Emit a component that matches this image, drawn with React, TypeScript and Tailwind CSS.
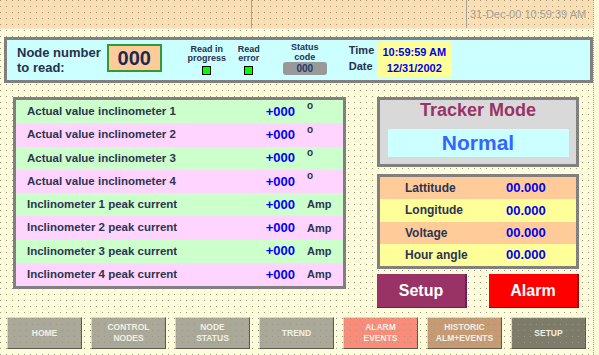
import React from 'react';

const DOTS =
  'bg-[radial-gradient(circle_at_0.5px_0.5px,#9a9682_0.8px,transparent_0.9px)] bg-[length:6px_6px]';

const TABLE_ROWS = [
  { label: 'Actual value inclinometer 1', unit: 'o', tone: 'bg-[#ccffcc]' },
  { label: 'Actual value inclinometer 2', unit: 'o', tone: 'bg-[#ffd5ff]' },
  { label: 'Actual value inclinometer 3', unit: 'o', tone: 'bg-[#ccffcc]' },
  { label: 'Actual value inclinometer 4', unit: 'o', tone: 'bg-[#ffd5ff]' },
  { label: 'Inclinometer 1 peak current', unit: 'Amp', tone: 'bg-[#ccffcc]' },
  { label: 'Inclinometer 2 peak current', unit: 'Amp', tone: 'bg-[#ffd5ff]' },
  { label: 'Inclinometer 3 peak current', unit: 'Amp', tone: 'bg-[#ccffcc]' },
  { label: 'Inclinometer 4 peak current', unit: 'Amp', tone: 'bg-[#ffd5ff]' },
];

const INFO_ROWS = [
  { label: 'Lattitude', tone: 'bg-[#ffcc99]' },
  { label: 'Longitude', tone: 'bg-[#ffff99]' },
  { label: 'Voltage', tone: 'bg-[#ffcc99]' },
  { label: 'Hour angle', tone: 'bg-[#ffff99]' },
];

const NAV = [
  { lines: ['HOME'], tone: 'bg-[#aaa999]' },
  { lines: ['CONTROL', 'NODES'], tone: 'bg-[#aaa999]' },
  { lines: ['NODE', 'STATUS'], tone: 'bg-[#aaa999]' },
  { lines: ['TREND'], tone: 'bg-[#aaa999]' },
  { lines: ['ALARM', 'EVENTS'], tone: 'bg-[#ff8a78]' },
  { lines: ['HISTORIC', 'ALM+EVENTS'], tone: 'bg-[#c99a72]' },
  { lines: ['SETUP'], tone: 'bg-[#7d7c6a]' },
];

const Lamp = () => <div className="w-[9px] h-[9px] bg-[#00ff00] border border-black" />;

export default function App() {
  return (
    <div className="w-[599px] h-[355px] overflow-hidden bg-[#fffcdc] font-['Liberation_Sans',Arial,sans-serif]">
      <div className={`w-[594px] h-full flex flex-col border-r border-dotted border-[#8f9bb3] bg-[#fffcdc] ${DOTS}`}>
        {/* top status strip */}
        <div className={`h-[29px] flex border-b border-[#f2ead0] bg-[#fbdfb2] ${DOTS}`}>
          <div className="w-[252px] border-r border-[#a8a294]" />
          <div className="w-[215px] border-r border-[#a8a294]" />
          <div className="flex-1 flex items-center pl-[3px] text-[11px] text-[#a3a09a] whitespace-nowrap">
            31-Dec-00 10:59:39 AM
          </div>
        </div>

        {/* node read panel */}
        <div className="mt-[8px] ml-[4px] w-[589px] h-[46px] flex items-start border-[3px] border-[#808080] bg-[#ccffff] text-[#26304f] font-bold">
          <div className="ml-[10px] mt-[5px] text-[13px] leading-[15px]">
            <div>Node number</div>
            <div>to read:</div>
          </div>
          <div className="ml-[6px] mt-[4px] w-[55px] h-[28px] flex items-center justify-center border-2 border-[#339933] bg-[#ffcc99] text-[20px] text-[#1b2a55]">
            000
          </div>
          <div className="ml-[25px] mt-[5px] w-[40px] flex flex-col items-center text-[9px] leading-[9px]">
            <div>Read in</div>
            <div>progress</div>
            <div className="mt-[3px]">
              <Lamp />
            </div>
          </div>
          <div className="ml-[7px] mt-[5px] w-[30px] flex flex-col items-center text-[9px] leading-[9px]">
            <div>Read</div>
            <div>error</div>
            <div className="mt-[3px]">
              <Lamp />
            </div>
          </div>
          <div className="ml-[19px] mt-[2px] w-[44px] flex flex-col items-center text-[9px] leading-[10px]">
            <div>Status</div>
            <div>code</div>
            <div className="w-[44px] h-[13px] flex items-center justify-center rounded-[3px] bg-[#999999] text-[10px] text-[#1f3a6b]">
              000
            </div>
          </div>
          <div className="ml-[22px] mt-[2px] w-[26px] text-[11px] leading-[16px]">
            <div>Time</div>
            <div>Date</div>
          </div>
          <div className="ml-[2px] mt-[2px] w-[75px] h-[35px] flex flex-col justify-center items-center bg-[#ffff99] text-[11px] leading-[16px] text-[#0000ee]">
            <div>10:59:59 AM</div>
            <div>12/31/2002</div>
          </div>
        </div>

        <div className="mt-[14px] flex items-start">
          {/* measurement table */}
          <div className="ml-[13px] w-[333px] h-[192px] flex flex-col border-[3px] border-[#808080]">
            {TABLE_ROWS.map((row) => (
              <div key={row.label} className={`flex-1 flex items-center ${row.tone}`}>
                <div className="flex-1 pl-[11px] text-[11.5px] font-bold text-[#2c3450]">{row.label}</div>
                <div className="mr-[12px] text-[13px] font-bold text-[#0000ff]">+000</div>
                <div className="w-[36px] text-[11px] font-bold text-[#2c3450]">
                  {row.unit === 'o' ? <span className="relative top-[-6px] text-[10px]">o</span> : row.unit}
                </div>
              </div>
            ))}
          </div>

          {/* right column */}
          <div className="ml-[31px] w-[202px] flex flex-col">
            <div className="h-[70px] flex flex-col items-center border-[3px] border-[#808080] bg-[#d9d9d9]">
              <div className="text-[18px] leading-[20px] font-bold text-[#993366]">Tracker Mode</div>
              <div className="mt-[9px] w-[181px] h-[28px] flex items-center justify-center bg-[#ccffff] text-[21px] font-bold text-[#3366ff]">
                Normal
              </div>
            </div>

            <div className="mt-[7px] h-[95px] flex flex-col border-[3px] border-[#808080]">
              {INFO_ROWS.map((row) => (
                <div key={row.label} className={`flex-1 flex items-center ${row.tone}`}>
                  <div className="w-[126px] pl-[25px] text-[12px] font-bold text-[#2c3450]">{row.label}</div>
                  <div className="text-[13px] font-bold text-[#0000ee]">00.000</div>
                </div>
              ))}
            </div>

            <div className="mt-[5px] h-[34px] flex justify-between">
              <div className="w-[90px] flex items-center justify-center border-r-2 border-b border-[#6a1f5e] bg-[#993366] text-[16px] font-bold text-white">
                Setup
              </div>
              <div className="w-[90px] flex items-center justify-center border-r-2 border-b border-[#a00000] bg-[#ff0000] text-[16px] font-bold text-white">
                Alarm
              </div>
            </div>
          </div>
        </div>

        {/* bottom navigation */}
        <div className="mt-[9px] pl-[7px] flex gap-[9px]">
          {NAV.map((item) => (
            <div
              key={item.lines.join(' ')}
              className={`w-[75px] h-[32px] flex flex-col items-center justify-center border border-t-[#d8d8cc] border-l-[#d8d8cc] border-r-[#5a5a50] border-b-[#5a5a50] ${item.tone} ${DOTS} text-[8.5px] leading-[11px] font-bold text-[#f1f0e4]`}
            >
              {item.lines.map((l) => (
                <div key={l}>{l}</div>
              ))}
            </div>
          ))}
        </div>
      </div>
    </div>
  );
}
